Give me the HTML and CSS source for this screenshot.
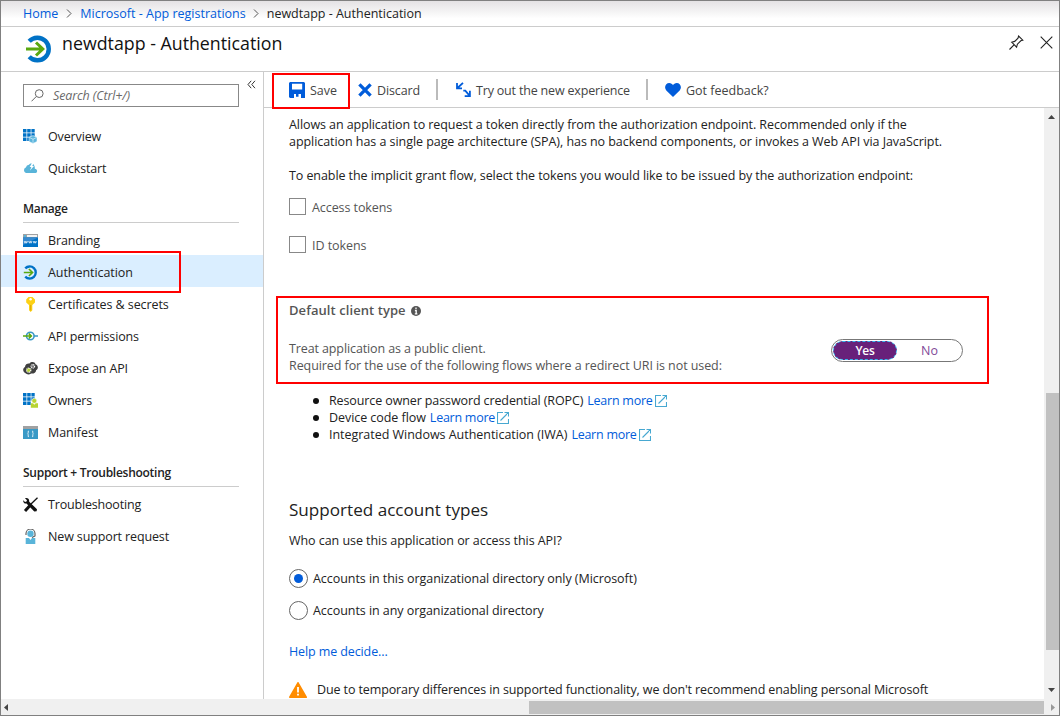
FILE: index.html
```html
<!DOCTYPE html>
<html lang="en">
<head>
<meta charset="utf-8">
<title>newdtapp - Authentication</title>
<link rel="stylesheet" href="styles.css">
</head>
<body>
<svg width="0" height="0" class="defs">
  <symbol id="auth" viewBox="0 0 26 28">
    <path d="M3.2 6.3A11.3 11.3 0 1 1 3.2 21.7" fill="none" stroke="#0072c6" stroke-width="4.4"/>
    <path d="M0 14H16M10 7.5L16.8 14L10 20.5" fill="none" stroke="#59a80f" stroke-width="3"/>
  </symbol>
  <symbol id="ext" viewBox="0 0 12 12">
    <path d="M6 .5H.5V11.500H11.500V7M3.500 8.500L11 1M7.500 .5H11.500V4.500" fill="none" stroke="#47a8d1" stroke-width="1.100"/>
  </symbol>
  <symbol id="grid" viewBox="0 0 15 15">
    <path d="M0 0h3.500v3.500H0zM4.200 0h3.500v3.500H4.200zM8.400 0h3.300v3.500H8.400zM0 4.200h3.500v3.500H0zM4.200 4.200h3.500v3.500H4.200zM8.400 4.200h3.300v3.500H8.400zM0 8.400h3.500v3.600H0zM4.200 8.400h3.500v3.600H4.200z" fill="#0072c6"/>
  </symbol>
</svg>
<div class="window">
  <nav class="crumbs">
    <a>Home</a><svg class="chev" viewBox="0 0 6 9"><path d="M1 .5L5 4.500L1 8.500"/></svg><a>Microsoft - App registrations</a><svg class="chev" viewBox="0 0 6 9"><path d="M1 .5L5 4.500L1 8.500"/></svg><span>newdtapp - Authentication</span>
  </nav>
  <header class="titlebar">
    <svg class="title-icon"><use href="#auth"/></svg>
    <h1>newdtapp - Authentication</h1>
    <svg class="pin" viewBox="0 0 15 15"><path d="M.5 14.500L5 9.800M2.700 7.200L7.600 12.200L8.400 9.200L11.800 5.800L13.800 5.200L9.600 1L9 3.200L5.700 6.400Z"/></svg>
    <svg class="close" viewBox="0 0 13 13"><path d="M.7 .7L12.300 12.300M12.300 .7L.7 12.300"/></svg>
  </header>
  <div class="main">
    <aside class="sidebar">
      <div class="search-row">
        <div class="search"><svg viewBox="0 0 13 13"><circle cx="8.200" cy="4.600" r="3.900"/><path d="M5.200 7.600L.5 12.300"/></svg><span>Search (Ctrl+/)</span></div>
        <svg class="collapse" viewBox="0 0 9 9"><path d="M4.200 .8L1 4.500L4.200 8.200M8 .8L4.800 4.500L8 8.200"/></svg>
      </div>
      <ul class="menu">
        <li><svg viewBox="0 0 15 15"><use href="#grid"/><path d="M10 6.600l4 1.700v4.200l-4 2-4-2V8.300z" fill="#5bb4dc" stroke="#fff" stroke-width=".5"/><path d="M6.400 8.500L10 10.200l3.700-1.700M10 10v4" fill="none" stroke="#d5effa" stroke-width=".7"/></svg><span>Overview</span></li>
        <li><svg viewBox="0 0 15 15"><path d="M3 12a3 3 0 0 1-.2-5.600A4 4 0 0 1 6 3.700c1-1.500 4.500-2 5.400 1.300.5 1 .5 2 .4 2.700A2.300 2.300 0 0 1 13 12z" fill="#59b4d9"/><path d="M9 2L6.700 6h1.700L7 9.500 11 5H9.200L11 2z" fill="#fff"/></svg><span class="tight-4">Quickstart</span></li>
      </ul>
      <h2>Manage</h2>
      <ul class="menu">
        <li><svg viewBox="0 0 15 15"><path d="M0 1h15v4H0z" fill="#a0a1a2"/><path d="M4 2h10v2H4z" fill="#f2f2f2"/><path d="M1 2h2v2H1z" fill="#59b4d9"/><path d="M0 4.500h15V14H0z" fill="#0072c6"/><path d="M0 4.500h15L0 12z" fill="#3689cf"/><path d="M1.200 8l.8 2.200.8-2 .8 2 .8-2.200M5.700 8l.8 2.200.8-2 .8 2L8.900 8M10.200 8l.8 2.200.8-2 .8 2 .8-2.200" fill="none" stroke="#fff" stroke-width=".7"/></svg><span>Branding</span></li>
        <li class="selected"><svg viewBox="0 0 26 28"><use href="#auth"/></svg><span class="tight-1">Authentication</span></li>
        <li><svg viewBox="0 0 15 15"><path d="M5.500 0h4L12 2.500v3L9.300 8v5.300L7.700 15 6 13.300V8L3.200 5.500v-3z" fill="#fcd116"/><circle cx="7.600" cy="2.300" r="1.200" fill="#fff"/><path d="M7.700 8v5.500" stroke="#dba500"/></svg><span class="tight-2">Certificates &amp; secrets</span></li>
        <li><svg viewBox="0 0 15 15"><circle cx="7.300" cy="7" r="3.800" fill="none" stroke="#3999c6" stroke-width="1.600"/><path d="M11 7h4" stroke="#3999c6" stroke-width="1.500"/><path d="M0 7h8M5.800 4.500L8.300 7L5.800 9.500" fill="none" stroke="#59a80f" stroke-width="1.700"/></svg><span>API permissions</span></li>
        <li><svg viewBox="0 0 15 15"><path d="M2.500 12.300C-.5 11-.5 7 2 6c0-3 3-4 4.500-3.500 1.500-2 5.500-2 6 .8 3 1 3 4.700.7 5.700-.3 3-3 4-5 3.500-2 1.300-4.300 1.200-5.700-.2z" fill="#404040"/><circle cx="5.700" cy="9.200" r="2.100" fill="#b8d432" stroke="#fff" stroke-width="1.200" stroke-dasharray="1 .6"/><circle cx="9.800" cy="5.400" r="1.800" fill="#7a7a7a" stroke="#fff" stroke-width="1.100" stroke-dasharray="1 .6"/></svg><span>Expose an API</span></li>
        <li><svg viewBox="0 0 15 15"><use href="#grid"/><circle cx="11.300" cy="7.800" r="2.500" fill="#b8d432" stroke="#fff" stroke-width=".6"/><path d="M7.800 10.300H10l1.300 1.500 1.400-1.500H15v4.500H7.800z" fill="#b8d432"/></svg><span class="tight-4">Owners</span></li>
        <li><svg viewBox="0 0 15 15"><path d="M0 1h15v3.500H0z" fill="#a0a1a2"/><path d="M0 4h15v10H0z" fill="#3999c6"/><path d="M6 6.200H5.200v2l-.7.700.7.700v2H6M9 6.200h.8v2l.7.700-.7.700v2H9" fill="none" stroke="#fff" stroke-width=".8"/></svg><span class="tight-1">Manifest</span></li>
      </ul>
      <h2>Support + Troubleshooting</h2>
      <ul class="menu">
        <li><svg viewBox="0 0 15 15"><path d="M2 1.300l2 2L3.500 4.600 2 5 .3 3.300C0 5 1 6.800 3.500 6.500l7.800 8 2.300-.2.400-2L6.200 4.800C6.500 2 4.500.5 2 1.300z" fill="#111"/><path d="M14.500 .8L8 7" stroke="#111" stroke-width="1.300"/><path d="M7 8.500L2 14" stroke="#111" stroke-width="3"/></svg><span class="tight-4">Troubleshooting</span></li>
        <li><svg viewBox="0 0 15 15"><path d="M3 6V4.500a4.500 4.500 0 0 1 9 0V7L9 8.500" fill="none" stroke="#555" stroke-width="1.100"/><circle cx="7.500" cy="4.700" r="3.200" fill="#59b4d9"/><path d="M2.700 9H6l1.500 2L9 9h3.300v6H2.700z" fill="#59b4d9"/></svg><span>New support request</span></li>
      </ul>
    </aside>
    <section class="pane">
      <div class="commands">
        <div class="cmd save"><svg viewBox="0 0 16 16"><path d="M1 0H15L16 1V16H12V12H9.500V14.700H7V12H5V16H1L0 15V1zM3 1.700V7.500H13.200V1.700z" fill="#015cda" fill-rule="evenodd"/></svg><span>Save</span></div>
        <div class="cmd discard"><svg viewBox="0 0 14 14"><path d="M1.400 1.400L12.600 12.600M12.600 1.400L1.400 12.600" stroke="#015cda" stroke-width="3.300"/></svg><span class="tight-3">Discard</span></div>
        <div class="cmd try"><svg viewBox="0 0 15 15"><path d="M7 .8L2 5.500M1 1v5.300h5M7.300 8.600h2l4 4.700M13.900 8.800v5.300H8.700" fill="none" stroke="#015cda" stroke-width="1.800"/></svg><span class="tight-4">Try out the new experience</span></div>
        <div class="cmd feedback"><svg viewBox="0 0 16 14"><path d="M8 14L1.300 7.600C-1.500 4 1 0 4.200 0 6 0 7.300 1 8 2.200 8.700 1 10 0 11.800 0 15 0 17.500 4 14.700 7.600z" fill="#015cda"/></svg><span>Got feedback?</span></div>
      </div>
      <div class="body">
        <div class="content">
          <p><span class="tight-2">Allows an application to request a token directly from the authorization endpoint. Recommended only if the</span><br><span class="tight-1">application has a single page architecture (SPA), has no backend components, or invokes a Web API via JavaScript.</span></p>
          <p class="enable"><span class="tight-2">To enable the implicit grant flow, select the tokens you would like to be issued by the authorization endpoint:</span></p>
          <div class="check"><i></i><span class="tight-2">Access tokens</span></div>
          <div class="check"><i></i><span class="tight-1">ID tokens</span></div>
          <section class="client">
            <h3><span>Default client type</span><svg viewBox="0 0 10 10"><circle cx="5" cy="5" r="5" fill="#555"/><path d="M5 1.500v1.600M3.900 4.500H5.200V7.700M3.800 7.900h2.600" stroke="#fff" stroke-width="1.300" fill="none"/></svg></h3>
            <div class="client-row">
              <p><span class="tight-3">Treat application as a public client.</span><br><span class="tight-2">Required for the use of the following flows where a redirect URI is not used:</span></p>
              <div class="toggle"><b>Yes</b><span>No</span></div>
            </div>
          </section>
          <ul class="flows">
            <li><span class="tight-3">Resource owner password credential (ROPC)</span> <a>Learn more</a><svg><use href="#ext"/></svg></li>
            <li><span class="tight-1">Device code flow</span> <a>Learn more</a><svg><use href="#ext"/></svg></li>
            <li><span class="tight-0">Integrated Windows Authentication (IWA)</span> <a>Learn more</a><svg><use href="#ext"/></svg></li>
          </ul>
          <h4>Supported account types</h4>
          <p class="who"><span class="tight-1">Who can use this application or access this API?</span></p>
          <div class="radio on"><i></i><span class="tight-1">Accounts in this organizational directory only (Microsoft)</span></div>
          <div class="radio"><i></i><span class="tight-1">Accounts in any organizational directory</span></div>
          <p class="help"><a class="tight-3">Help me decide...</a></p>
          <div class="warn"><svg viewBox="0 0 18 16"><path d="M9 .8L17.200 15.200H.8z" fill="#ff8c00" stroke="#ff8c00" stroke-width="1.600" stroke-linejoin="round"/><path d="M9 5v5.500M9 11.700v1.800" stroke="#fff" stroke-width="1.800"/></svg><span class="tight-3">Due to temporary differences in supported functionality, we don't recommend enabling personal Microsoft</span></div>
        </div>
        <div class="vscroll"><svg viewBox="0 0 7 4"><path d="M0 4L3.500 0L7 4z"/></svg><div class="vthumb"></div><svg viewBox="0 0 7 4"><path d="M0 0L3.500 4L7 0z"/></svg></div>
      </div>
    </section>
  </div>
  <div class="hscroll"><svg viewBox="0 0 4 7"><path d="M4 0L0 3.500L4 7z"/></svg><div class="hthumb"></div><svg class="dim" viewBox="0 0 4 7"><path d="M0 0L4 3.500L0 7z"/></svg></div>
</div>
</body>
</html>
```
FILE: styles.css
```css
*, *::before, *::after { box-sizing: border-box; }
body { margin: 0; font: 12.5px/17px "Open Sans", "Noto Sans", sans-serif; color: #222; background: #fff; overflow: hidden; }
ul, p, h1, h2, h3, h4 { margin: 0; padding: 0; font-weight: 400; }
svg { display: block; flex: none; }
span, a { white-space: nowrap; }
a { color: #015cda; }
.defs { position: absolute; }
.window { width: 1060px; height: 716px; border: 1px solid #808080; display: flex; flex-direction: column; }
.crumbs { height: 26px; flex: none; border-bottom: 1px solid #ccc; display: flex; align-items: center; padding-left: 22px; background: linear-gradient(#e4e2e4, #fff 70%); }
.chev { width: 6px; height: 9px; margin: 0 8px; fill: none; stroke: #555; }
.chev ~ .chev { margin-left: 7px; }
.titlebar { height: 45px; flex: none; border-bottom: 1px solid #ccc; display: flex; align-items: flex-start; padding: 0 6px 0 24px; }
.title-icon { width: 26px; height: 28px; margin: 8px 0 0 .5px; }
.titlebar h1 { font-size: 17.8px; line-height: 24px; margin: 4px 0 0 10.5px; flex: 1; color: #111; }
.pin { width: 15px; height: 15px; margin: 8px 16px 0 0; fill: none; stroke: #222; stroke-width: 1.1; }
.close { width: 13px; height: 13px; margin-top: 9px; stroke: #222; stroke-width: 1.1; }
.main { display: flex; height: 627px; flex: none; }
.sidebar { width: 263px; border-right: 1px solid #ccc; padding-top: 12px; flex: none; }
.search-row { display: flex; padding-left: 22px; margin-bottom: 12px; }
.search { width: 216px; height: 23px; border: 1px solid #888; display: flex; align-items: center; padding-left: 7px; font-style: italic; color: #6a6a6a; letter-spacing: -.12px; }
.search svg { width: 13px; height: 13px; margin-right: 9px; fill: none; stroke: #666; }
.collapse { width: 9px; height: 9px; margin: -4px 0 0 8px; fill: none; stroke: #333; }
.menu { list-style: none; letter-spacing: -.13px; }
.menu li { height: 32px; display: flex; align-items: center; padding: 2px 0 0 22px; position: relative; }
.menu svg { width: 15px; height: 15px; margin-right: 10px; }
.menu .selected { background: #daeeff; }
.selected::after, .save::after, .client::after { content: ""; position: absolute; border: 2px solid #f00; }
.selected::after { left: 14px; top: -4px; width: 166px; height: 42px; }
.sidebar h2 { font-size: 12px; font-weight: 600; line-height: 17px; height: 40px; margin: 0 24px 0 22px; padding-top: 17px; border-bottom: 1px solid #ccc; letter-spacing: -.27px; }
.pane { flex: 1; min-width: 0; }
.commands { height: 36px; border-bottom: 1px solid #ccc; display: flex; align-items: center; color: #444; }
.cmd { display: flex; align-items: center; position: relative; height: 21px; }
.cmd span, .check span { padding-top: 2px; }
.save { width: 69px; margin-left: 25px; }
.save svg { width: 16px; height: 16px; margin-right: 5px; }
.save::after { left: -17px; top: -6px; width: 78px; height: 36px; }
.discard { width: 80px; border-right: 2px solid #bbb; }
.discard svg { width: 14px; height: 14px; margin-right: 5px; }
.try { width: 210px; border-right: 2px solid #bbb; padding-left: 18px; }
.try svg { width: 15px; height: 15px; margin-right: 5px; }
.feedback { padding-left: 17px; }
.feedback svg { width: 16px; height: 14px; margin-right: 5px; }
.body { height: 591px; display: flex; }
.content { flex: 1; min-width: 0; padding: 8px 0 0 25px; overflow: hidden; }
.enable { margin: 17px 0 14px; }
.check { display: flex; align-items: center; height: 17px; margin-bottom: 21px; color: #555; }
.check i { width: 17px; height: 17px; border: 1px solid #888; margin-right: 6px; }
.client { margin: 43px 55px 0 -13px; height: 88px; padding: 6px 0 0 13px; position: relative; color: #555; }
.client::after { inset: 0; }
.client h3 { display: flex; align-items: center; font-size: 13px; font-weight: 600; height: 17px; letter-spacing: .07px; }
.client h3 svg { width: 10px; height: 10px; margin-left: 5px; }
.client-row { display: flex; justify-content: space-between; margin-top: 21px; }
.toggle { width: 132px; height: 23px; margin: -1px 26px 0 0; border: 1px solid #777; border-radius: 12px; display: flex; align-items: center; padding-left: 1px; line-height: 17px; }
.toggle b { width: 64px; height: 19px; border-radius: 10px; background: #68217a; color: #fff; border: 1px dashed #36b5ee; font-weight: 600; font-size: 12px; text-align: center; letter-spacing: -.3px; }
.toggle span { flex: 1; text-align: center; color: #804998; }
.flows { list-style: none; padding-left: 40px; margin-top: 8px; }
.flows li { display: flex; align-items: center; height: 17px; }
.flows li::before { content: ""; width: 6px; height: 6px; border-radius: 3px; background: #111; margin: 0 10px 0 -16px; }
.flows a { margin-left: 4px; letter-spacing: -.25px; }
.flows svg { width: 12px; height: 12px; margin-left: 2px; }
.content h4 { font-size: 17.1px; line-height: 24px; margin-top: 55px; }
.who { margin: 10px 0 20px; }
.radio { display: flex; align-items: center; height: 19px; margin-bottom: 13px; }
.radio i { width: 19px; height: 19px; border: 1px solid #666; border-radius: 50%; margin-right: 5px; display: flex; align-items: center; justify-content: center; }
.radio.on i::after { content: ""; width: 9px; height: 9px; border-radius: 50%; background: #015cda; }
.help { margin: 23px 0 21px; }
.warn { display: flex; align-items: center; height: 17px; }
.warn svg { width: 18px; height: 16px; margin-right: 10px; }
.tight-0 { letter-spacing: -.03px; }
.tight-1 { letter-spacing: -.055px; }
.tight-2 { letter-spacing: -.078px; }
.tight-3 { letter-spacing: -.11px; }
.tight-4 { letter-spacing: -.18px; }
.vscroll { width: 15px; background: #f0f0f0; flex: none; display: flex; flex-direction: column; align-items: center; padding: 7px 0; }
.vscroll svg { width: 7px; height: 4px; fill: #444; }
.vthumb { width: 13px; height: 257px; background: #c1c1c1; margin: 274px 0 auto 2px; }
.hscroll { height: 16px; background: #f0f0f0; display: flex; align-items: center; padding: 0 4px 0 3px; }
.hscroll svg { width: 4px; height: 7px; fill: #444; }
.hthumb { width: 515px; height: 13px; background: #c1c1c1; margin: 1px auto 0 521px; }
.hscroll .dim { fill: #999; }
```
